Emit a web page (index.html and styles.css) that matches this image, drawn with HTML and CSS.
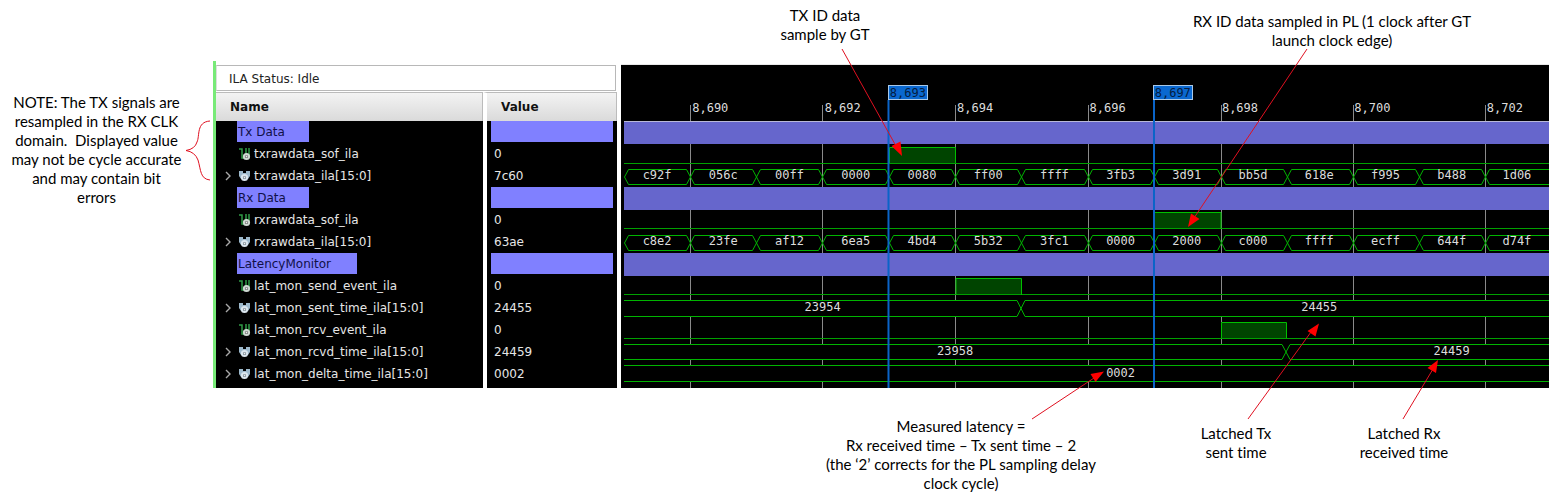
FILE: index.html
```html
<!DOCTYPE html>
<html lang="en">
<head>
<meta charset="utf-8">
<title>ILA latency capture</title>
<link rel="stylesheet" href="styles.css">
</head>
<body>
<svg class="defs" aria-hidden="true">
  <defs>
    <symbol id="wire" viewBox="0 0 13 14">
      <path d="M1 2h3v9h3M8 1v6M11 1v7" fill="none" stroke="#2f9a45" stroke-width="1.5"/>
      <circle cx="8.5" cy="9.5" r="2.6" fill="#555" stroke="#cfd8d2" stroke-width="2"/>
      <circle cx="8.5" cy="9.5" r="1" fill="#eee"/>
    </symbol>
    <symbol id="bus" viewBox="0 0 13 14">
      <path d="M1 2h4v2h3V2h4v5l-2 3H3L1 7z" fill="#9db9cc"/>
      <circle cx="6.5" cy="8.5" r="2.6" fill="#5c6e7a" stroke="#dbe6ee" stroke-width="2"/>
      <circle cx="6.5" cy="8.5" r="1" fill="#eee"/>
    </symbol>
    <symbol id="chevron" viewBox="0 0 6 10">
      <path d="M1 1l4 4-4 4" fill="none" stroke="#a8a8a8" stroke-width="1.4"/>
    </symbol>
  </defs>
</svg>

<main class="figure">
  <div class="notes notes-top">
    <p class="note note-tx">TX ID data<br>sample by GT</p>
    <p class="note note-rx">RX ID data sampled in PL (1 clock after GT<br>launch clock edge)</p>
  </div>

  <div class="capture">
    <p class="note note-side">NOTE: The TX signals are<br>resampled in the RX CLK<br>domain.&nbsp; Displayed value<br>may not be cycle accurate<br>and may contain bit<br>errors</p>

    <section class="signals">
      <div class="status">ILA Status: Idle</div>
      <table class="list">
        <thead><tr><th class="col-name">Name</th><th class="col-value">Value</th></tr></thead>
        <tbody>
          <tr class="group"><td><span class="tag">Tx Data</span></td><td><div class="fill"></div></td></tr>
          <tr><td><div class="sig"><i></i><svg class="ico"><use href="#wire"/></svg>txrawdata_sof_ila</div></td><td>0</td></tr>
          <tr><td><div class="sig"><svg class="chev"><use href="#chevron"/></svg><svg class="ico"><use href="#bus"/></svg>txrawdata_ila[15:0]</div></td><td>7c60</td></tr>
          <tr class="group"><td><span class="tag">Rx Data</span></td><td><div class="fill"></div></td></tr>
          <tr><td><div class="sig"><i></i><svg class="ico"><use href="#wire"/></svg>rxrawdata_sof_ila</div></td><td>0</td></tr>
          <tr><td><div class="sig"><svg class="chev"><use href="#chevron"/></svg><svg class="ico"><use href="#bus"/></svg>rxrawdata_ila[15:0]</div></td><td>63ae</td></tr>
          <tr class="group"><td><span class="tag tag-wide">LatencyMonitor</span></td><td><div class="fill"></div></td></tr>
          <tr><td><div class="sig"><i></i><svg class="ico"><use href="#wire"/></svg>lat_mon_send_event_ila</div></td><td>0</td></tr>
          <tr><td><div class="sig"><svg class="chev"><use href="#chevron"/></svg><svg class="ico"><use href="#bus"/></svg>lat_mon_sent_time_ila[15:0]</div></td><td>24455</td></tr>
          <tr><td><div class="sig"><i></i><svg class="ico"><use href="#wire"/></svg>lat_mon_rcv_event_ila</div></td><td>0</td></tr>
          <tr><td><div class="sig"><svg class="chev"><use href="#chevron"/></svg><svg class="ico"><use href="#bus"/></svg>lat_mon_rcvd_time_ila[15:0]</div></td><td>24459</td></tr>
          <tr class="last"><td><div class="sig"><svg class="chev"><use href="#chevron"/></svg><svg class="ico"><use href="#bus"/></svg>lat_mon_delta_time_ila[15:0]</div></td><td>0002</td></tr>
        </tbody>
      </table>
    </section>

    <section class="wave">
      <svg class="plot" viewBox="621 65 928 323" preserveAspectRatio="none" aria-hidden="true">
        <path class="grid" d="M690.5 105V388M822.5 105V388M955.5 105V388M1088.5 105V388M1221.5 105V388M1353.5 105V388M1485.5 105V388"/>
        <path class="blank" d="M624 300H1549V317H624zM624 344H1549V360H624zM624 366H1549V382H624z"/>
        <path class="band" d="M624 121H1549V144H624zM624 187H1549V210H624zM624 253H1549V276H624z"/>
        <path class="axis" d="M624 121.500H1549"/>
        <path class="pulse" d="M889 148H955V163H889zM1154 213H1221V229H1154zM956 279H1021V295H956zM1221 322H1286V338H1221z"/>
        <path class="low" d="M624 163.500H1549M624 228.500H1549M624 294.500H1549M624 338.500H1549"/>
        <path class="high" d="M889.500 163V147.500H955.500V163M1154.500 229V212.500H1221V229M956 295V278.500H1021.500V295M1221.500 338V322.500H1286.500V338"/>
        <path id="cells" class="busline" d="M624.5 177l4-7.500h58l4 7.500-4 7.500h-58zM690.5 177l4-7.500h58l4 7.500-4 7.500h-58zM756.5 177l4-7.500h58l4 7.500-4 7.500h-58zM822.5 177l4-7.500h59l4 7.500-4 7.500h-59zM889.5 177l4-7.500h58l4 7.500-4 7.500h-58zM955.5 177l4-7.500h58l4 7.500-4 7.500h-58zM1021.5 177l4-7.500h59l4 7.500-4 7.500h-59zM1088.5 177l4-7.500h58l4 7.500-4 7.500h-58zM1154.5 177l4-7.500h59l4 7.500-4 7.500h-59zM1221.5 177l4-7.500h58l4 7.500-4 7.500h-58zM1287.5 177l4-7.500h58l4 7.500-4 7.500h-58zM1353.5 177l4-7.500h58l4 7.500-4 7.500h-58zM1419.5 177l4-7.500h58l4 7.500-4 7.500h-58zM1549 169.500H1489.500l-4 7.500 4 7.500H1549"/>
        <use href="#cells" y="66"/>
        <path class="busline" d="M624 300.500H1017l8 16H1549M624 316.500H1017l8-16H1549M624 344.500H1282l8 15H1549M624 359.500H1282l8-15H1549M624 365.500H1549M624 381.500H1549"/>
        <path class="cursor" d="M888.500 100V388M1154 100V388"/>
      </svg>
      <div class="overlay">
        <div class="ruler">
          <span class="flag at-5">8,693</span><span class="flag at-9">8,697</span>
          <span class="tick at-2">8,690</span><span class="tick at-4">8,692</span><span class="tick at-6">8,694</span><span class="tick at-8">8,696</span><span class="tick at-10">8,698</span><span class="tick at-12">8,700</span><span class="tick at-14">8,702</span>
        </div>
        <div class="row"></div>
        <div class="row"></div>
        <div class="row"><span>c92f</span><span>056c</span><span>00ff</span><span>0000</span><span>0080</span><span>ff00</span><span>ffff</span><span>3fb3</span><span>3d91</span><span>bb5d</span><span>618e</span><span>f995</span><span>b488</span><span>1d06</span></div>
        <div class="row"></div>
        <div class="row"></div>
        <div class="row"><span>c8e2</span><span>23fe</span><span>af12</span><span>6ea5</span><span>4bd4</span><span>5b32</span><span>3fc1</span><span>0000</span><span>2000</span><span>c000</span><span>ffff</span><span>ecff</span><span>644f</span><span>d74f</span></div>
        <div class="row"></div>
        <div class="row"></div>
        <div class="row"><span class="sent-before">23954</span><span class="at-11">24455</span></div>
        <div class="row"></div>
        <div class="row"><span class="rcvd-before">23958</span><span class="at-13">24459</span></div>
        <div class="row"><span class="at-8">0002</span></div>
      </div>
    </section>
  </div>

  <div class="notes notes-bottom">
    <p class="note note-latency">Measured latency =<br>Rx received time – Tx sent time – 2<br>(the ‘2’ corrects for the PL sampling delay<br>clock cycle)</p>
    <p class="note note-sent">Latched Tx<br>sent time</p>
    <p class="note note-rcvd">Latched Rx<br>received time</p>
  </div>

  <svg class="arrows" viewBox="0 0 1553 501" preserveAspectRatio="none" aria-hidden="true">
    <path class="line" d="M842 49L896 146M1307 49L1194 218M1032 419L1094 378M1248 419L1311 332M1403 419L1433 369"/>
    <path class="head" d="M902 156L891.500 146L900.500 141.500zM1188 227L1191 213.500L1199.500 219zM1104 371.500L1095.500 382L1090.500 374zM1319 323.500L1315.500 336.500L1307.500 331zM1438 360L1436 373L1427.500 368z"/>
    <path class="line brace" d="M210 121C196 122 200 136 197 142Q195 149 186 150.500Q195 152 198 160C201 170 200 179 210 180"/>
  </svg>
</main>
</body>
</html>
```

FILE: styles.css
```css
* { box-sizing: border-box; }

body {
  margin: 0;
  background: #fff;
  color: #000;
  font-family: "DejaVu Sans", sans-serif;
  font-size: 12px;
}

.defs { position: absolute; width: 0; height: 0; }

.figure { position: relative; overflow: hidden; }

/* Written notes around the capture */
.note {
  margin: 0;
  font-family: Lato, Calibri, sans-serif;
  font-size: 15px;
  font-variant-ligatures: none;
  line-height: 19px;
  text-align: center;
  white-space: nowrap;
}

.notes { display: grid; }
.notes-top {
  grid-template-columns: 735fr 180fr 272fr 290fr 76fr;
  height: 61px;
  padding-top: 6px;
}
.note-tx { grid-column: 2; }
.note-rx { grid-column: 4; padding-top: 6px; }

.notes-bottom {
  grid-template-columns: 816fr 290fr 70fr 120fr 38fr 140fr 79fr;
  padding: 29px 0 8px;
}
.note-latency { grid-column: 2; }
.note-sent { grid-column: 4; padding-top: 7px; }
.note-rcvd { grid-column: 6; padding-top: 7px; }

.capture {
  display: grid;
  grid-template-columns: minmax(0, 213fr) minmax(0, 404fr) minmax(0, 932fr) minmax(0, 4fr);
}
.note-side { padding: 32px 20px 0 0; }

/* Signal list */
.signals {
  border-left: 3px solid #78ea78;
  padding-top: 4px;
}
.status {
  height: 26px;
  margin-right: 1px;
  padding-left: 12px;
  border: 1px solid #b8b8b8;
  border-left-color: #ddd;
  line-height: 26px;
  color: #222;
}
.list {
  width: 100%;
  margin-top: 1px;
  border-collapse: separate;
  border-spacing: 0;
  table-layout: fixed;
}
.list th {
  height: 29px;
  padding: 0 0 0 14px;
  border-top: 1px solid #bbb;
  border-right: 1px solid #bbb;
  background: linear-gradient(#f3f3f3, #dadada);
  text-align: left;
  font-size: 12px;
  color: #111;
}
.col-name { width: 267px; }
.list td {
  height: 22px;
  padding: 0 0 0 7px;
  background: #000;
  color: #e6e6e6;
  line-height: 22px;
  vertical-align: top;
  white-space: nowrap;
}
.list td:first-child { padding-left: 9px; }
.list td + td, .list th + th { border-left: 4px solid #fff; }
.list .last td { height: 25px; }
.list .group td { padding: 0 4px; }
.list .group td:first-child { padding-left: 21px; }
.tag {
  display: block;
  width: 72px;
  height: 21px;
  padding-left: 1px;
  background: #8080ff;
  color: #101048;
}
.tag-wide { width: 120px; }
.fill { height: 21px; background: #8080ff; }
.sig {
  display: grid;
  grid-template-columns: 13px 16px auto;
  align-items: center;
  justify-content: start;
}
.chev { width: 6px; height: 10px; }
.ico { width: 13px; height: 14px; }

/* Waveform */
.wave {
  display: grid;
  margin: 3px 0 0 4px;
  border-top: 1px solid #e8e8e8;
  background: #000;
}
.plot, .overlay { grid-area: 1 / 1; }
.plot { width: 100%; height: 0; min-height: 100%; }
.overlay {
  padding: 0 0 3px 3px;
  font-family: "DejaVu Sans Mono", monospace;
  color: #dcdcdc;
}
.ruler, .row {
  display: grid;
  grid-template-columns: repeat(13, minmax(0, 33fr)) minmax(0, 32fr);
}
.ruler { height: 56px; padding-top: 20px; grid-template-rows: 15px 16px; }
.row { height: 22px; line-height: 20px; text-align: center; }
.flag {
  grid-row: 1;
  justify-self: start;
  width: 40px;
  margin-left: -1px;
  border: 1px solid #a8c8e8;
  background: #0a68d0;
  color: #041c40;
  line-height: 14px;
  padding-left: 1px;
}
.tick { grid-row: 2; padding-left: 2px; line-height: 16px; }
.at-2 { grid-column: 2; }
.at-4 { grid-column: 4; }
.at-5 { grid-column: 5; }
.at-6 { grid-column: 6; }
.at-8 { grid-column: 8; }
.at-9 { grid-column: 9; }
.at-10 { grid-column: 10; }
.at-11 { grid-column: 11; }
.at-12 { grid-column: 12; }
.at-13 { grid-column: 13; }
.at-14 { grid-column: 14; }
.sent-before { grid-column: 1 / 7; }
.rcvd-before { grid-column: 1 / 11; }

.grid { fill: none; stroke: #8a8a8a; }
.blank { fill: #000; }
.band { fill: #6666cc; }
.axis { stroke: #b8b8d8; }
.pulse { fill: #004400; }
.low { fill: none; stroke: #00a000; }
.high { fill: none; stroke: #00c000; }
.busline { fill: none; stroke: #00b400; }
.cursor { stroke: #0a64c8; stroke-width: 2; }

/* Arrows drawn over the notes and the capture */
.arrows {
  position: absolute;
  inset: 0;
  width: 100%;
  height: 100%;
  pointer-events: none;
}
.line { fill: none; stroke: #e01020; stroke-width: 1; }
.head { fill: #f00; }
```
